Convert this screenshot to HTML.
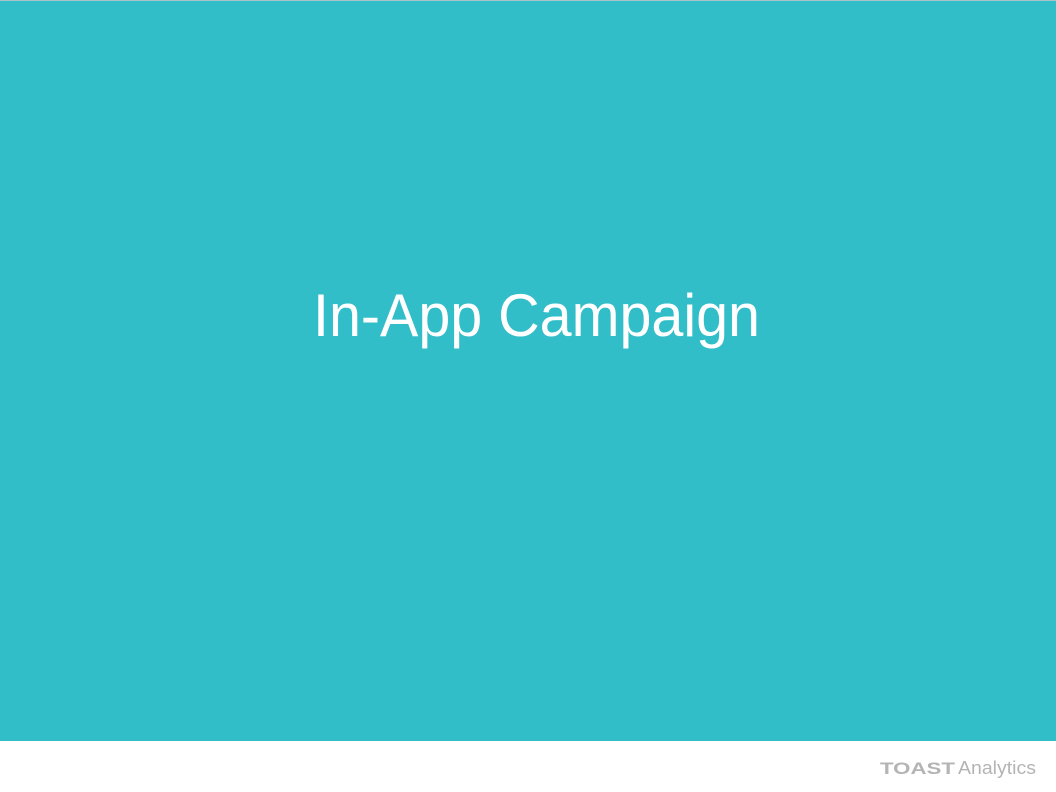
<!DOCTYPE html>
<html><head><style>
html,body{margin:0;padding:0;}
body{width:1056px;height:792px;position:relative;background:#fff;overflow:hidden;font-family:"Liberation Sans",sans-serif;}
.top{position:absolute;left:0;top:0;width:1056px;height:741px;background:#32bec9;border-top:1px solid #a9c3c6;box-sizing:border-box;}
svg{position:absolute;left:0;top:0;}
</style></head><body>
<div class="top"></div>
<svg width="1056" height="792">
<text x="313" y="336" font-family="Liberation Sans, sans-serif" font-size="60" fill="#ffffff" textLength="447" lengthAdjust="spacingAndGlyphs">In-App Campaign</text>
<text x="880" y="774" font-family="Liberation Sans, sans-serif" font-size="17" font-weight="bold" fill="#b4b4b4" textLength="75" lengthAdjust="spacingAndGlyphs">TOAST</text>
<text x="958" y="774" font-family="Liberation Sans, sans-serif" font-size="18" fill="#b4b4b4" textLength="78" lengthAdjust="spacingAndGlyphs">Analytics</text>
</svg>
</body></html>
